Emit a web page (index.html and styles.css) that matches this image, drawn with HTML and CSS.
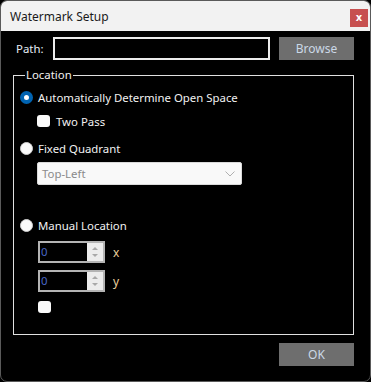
FILE: index.html
```html
<!DOCTYPE html>
<html lang="en">
<head>
    <meta charset="UTF-8">
    <meta name="viewport" content="width=device-width, initial-scale=1.0">
    <link rel="stylesheet" href="styles.css">
    <title>Watermark Setup</title>
</head>
<body>
    <div class="window">
        <div class="titlebar">
            <span class="title">Watermark Setup</span>
            <button class="close-btn">x</button>
        </div>

        <div class="content">
            <div class="path-row">
                <label for="path" class="path-label">Path:</label>
                <input type="text" id="path" class="path-input">
                <button class="btn">Browse</button>
            </div>

            <fieldset class="location">
                <legend>Location</legend>

                <div class="option-row">
                    <span class="radio checked"></span>
                    <span>Automatically Determine Open Space</span>
                </div>
                <div class="option-row sub">
                    <span class="checkbox"></span>
                    <span class="check-text">Two Pass</span>
                </div>

                <div class="option-row fixed">
                    <span class="radio"></span>
                    <span>Fixed Quadrant</span>
                </div>
                <div class="combo">
                    <span>Top-Left</span>
                    <svg width="10" height="6" viewBox="0 0 10 6">
                        <polyline points="0.5,0.5 5,5 9.5,0.5" fill="none" stroke="#b0b0b0" stroke-width="1"/>
                    </svg>
                </div>

                <div class="option-row manual">
                    <span class="radio"></span>
                    <span>Manual Location</span>
                </div>
                <div class="num-row first">
                    <div class="numeric">
                        <span class="num-value">0</span>
                        <div class="spinner">
                            <span class="arrow up"></span>
                            <span class="arrow down"></span>
                        </div>
                    </div>
                    <span class="axis">x</span>
                </div>
                <div class="num-row">
                    <div class="numeric">
                        <span class="num-value">0</span>
                        <div class="spinner">
                            <span class="arrow up"></span>
                            <span class="arrow down"></span>
                        </div>
                    </div>
                    <span class="axis">y</span>
                </div>
                <div class="num-row check-only">
                    <span class="checkbox"></span>
                </div>
            </fieldset>

            <div class="footer">
                <button class="btn">OK</button>
            </div>
        </div>
    </div>
</body>
</html>
```

FILE: styles.css
```css
body {
    font-family: 'Segoe UI', 'Noto Sans', 'Open Sans', sans-serif;
    font-size: 11.4px;
    margin: 0;
    padding: 0;
    background-color: #000;
}

.window {
    width: 371px;
    height: 382px;
    box-sizing: border-box;
    border: 1px solid #5a5a5a;
    border-radius: 7px;
    overflow: hidden;
    background-color: #000;
    color: #f2f2f2;
}

.titlebar {
    height: 30px;
    background-color: #f2f2f2;
    display: flex;
    align-items: center;
    justify-content: space-between;
    padding: 0 2px 0 9px;
}

.title {
    color: #1a1a1a;
    font-size: 12px;
}

.close-btn {
    width: 18px;
    height: 18px;
    margin-top: 4px;
    border: none;
    padding: 0;
    background-color: #c75050;
    color: #fff;
    font-family: 'DejaVu Sans', sans-serif;
    font-size: 10px;
    font-weight: bold;
    line-height: 16px;
}

.content {
    padding: 6px 0 0 12px;
}

.path-row {
    display: flex;
    align-items: center;
    height: 23px;
}

.path-label {
    width: 37px;
    padding-left: 3px;
    color: #e6eef6;
}

.path-input {
    width: 217px;
    height: 23px;
    box-sizing: border-box;
    margin: 0;
    border: 2px solid #ececec;
    background-color: #000;
    outline: none;
}

.btn {
    width: 75px;
    height: 23px;
    border: none;
    background-color: #6e6e6e;
    color: #cbd8e6;
    font-family: inherit;
    font-size: 12px;
    padding: 0;
}

.path-row .btn {
    margin-left: 9px;
}

.location {
    width: 341px;
    height: 268px;
    box-sizing: border-box;
    margin: 7px 0 0 0;
    padding: 4px 0 0 6px;
    border: 1px solid #e0e0e0;
    min-inline-size: 0;
}

.location legend {
    padding: 0 1px;
    margin-left: 5px;
    line-height: 16px;
}

.option-row {
    display: flex;
    align-items: center;
    height: 20px;
}

.option-row.sub {
    margin-top: 4px;
    padding-left: 17px;
}

.option-row.fixed {
    margin-top: 7px;
}

.option-row.manual {
    margin-top: 30px;
}

.radio {
    width: 13px;
    height: 13px;
    box-sizing: border-box;
    border-radius: 50%;
    background-color: #fafafa;
    border: 1px solid #d0d0d0;
    margin-right: 5px;
}

.radio.checked {
    background-color: #fff;
    border: 4px solid #0063b1;
}

.checkbox {
    width: 13px;
    height: 12px;
    border-radius: 3px;
    background-color: #fafafa;
    display: inline-block;
}

.check-text {
    margin-left: 6px;
}

.combo {
    width: 205px;
    height: 23px;
    box-sizing: border-box;
    margin: 4px 0 0 17px;
    background-color: #f9f9f9;
    border: 1px solid #dadada;
    border-radius: 2px;
    display: flex;
    align-items: center;
    justify-content: space-between;
    padding: 0 6px 0 4px;
    color: #8a8a8a;
}

.num-row {
    display: flex;
    align-items: center;
    height: 22px;
    padding-left: 18px;
    margin-top: 7px;
}

.num-row.first {
    margin-top: 6px;
}

.num-row.check-only {
    height: 12px;
    margin-top: 9px;
}

.numeric {
    width: 67px;
    height: 22px;
    box-sizing: border-box;
    border: 2px solid #b4b4b4;
    display: flex;
    justify-content: space-between;
}

.num-value {
    color: #4866c8;
    padding-left: 1px;
    line-height: 17px;
}

.spinner {
    width: 16px;
    background-color: #ececec;
    display: flex;
    flex-direction: column;
    align-items: center;
    justify-content: space-around;
    padding: 2px 0;
}

.arrow {
    width: 0;
    height: 0;
    border-left: 3px solid transparent;
    border-right: 3px solid transparent;
}

.arrow.up {
    border-bottom: 3px solid #a8a8a8;
}

.arrow.down {
    border-top: 3px solid #a8a8a8;
}

.axis {
    margin-left: 8px;
    color: #eccf9c;
    font-size: 12px;
}

.footer {
    display: flex;
    justify-content: flex-end;
    padding-right: 16px;
    margin-top: 8px;
}
```
